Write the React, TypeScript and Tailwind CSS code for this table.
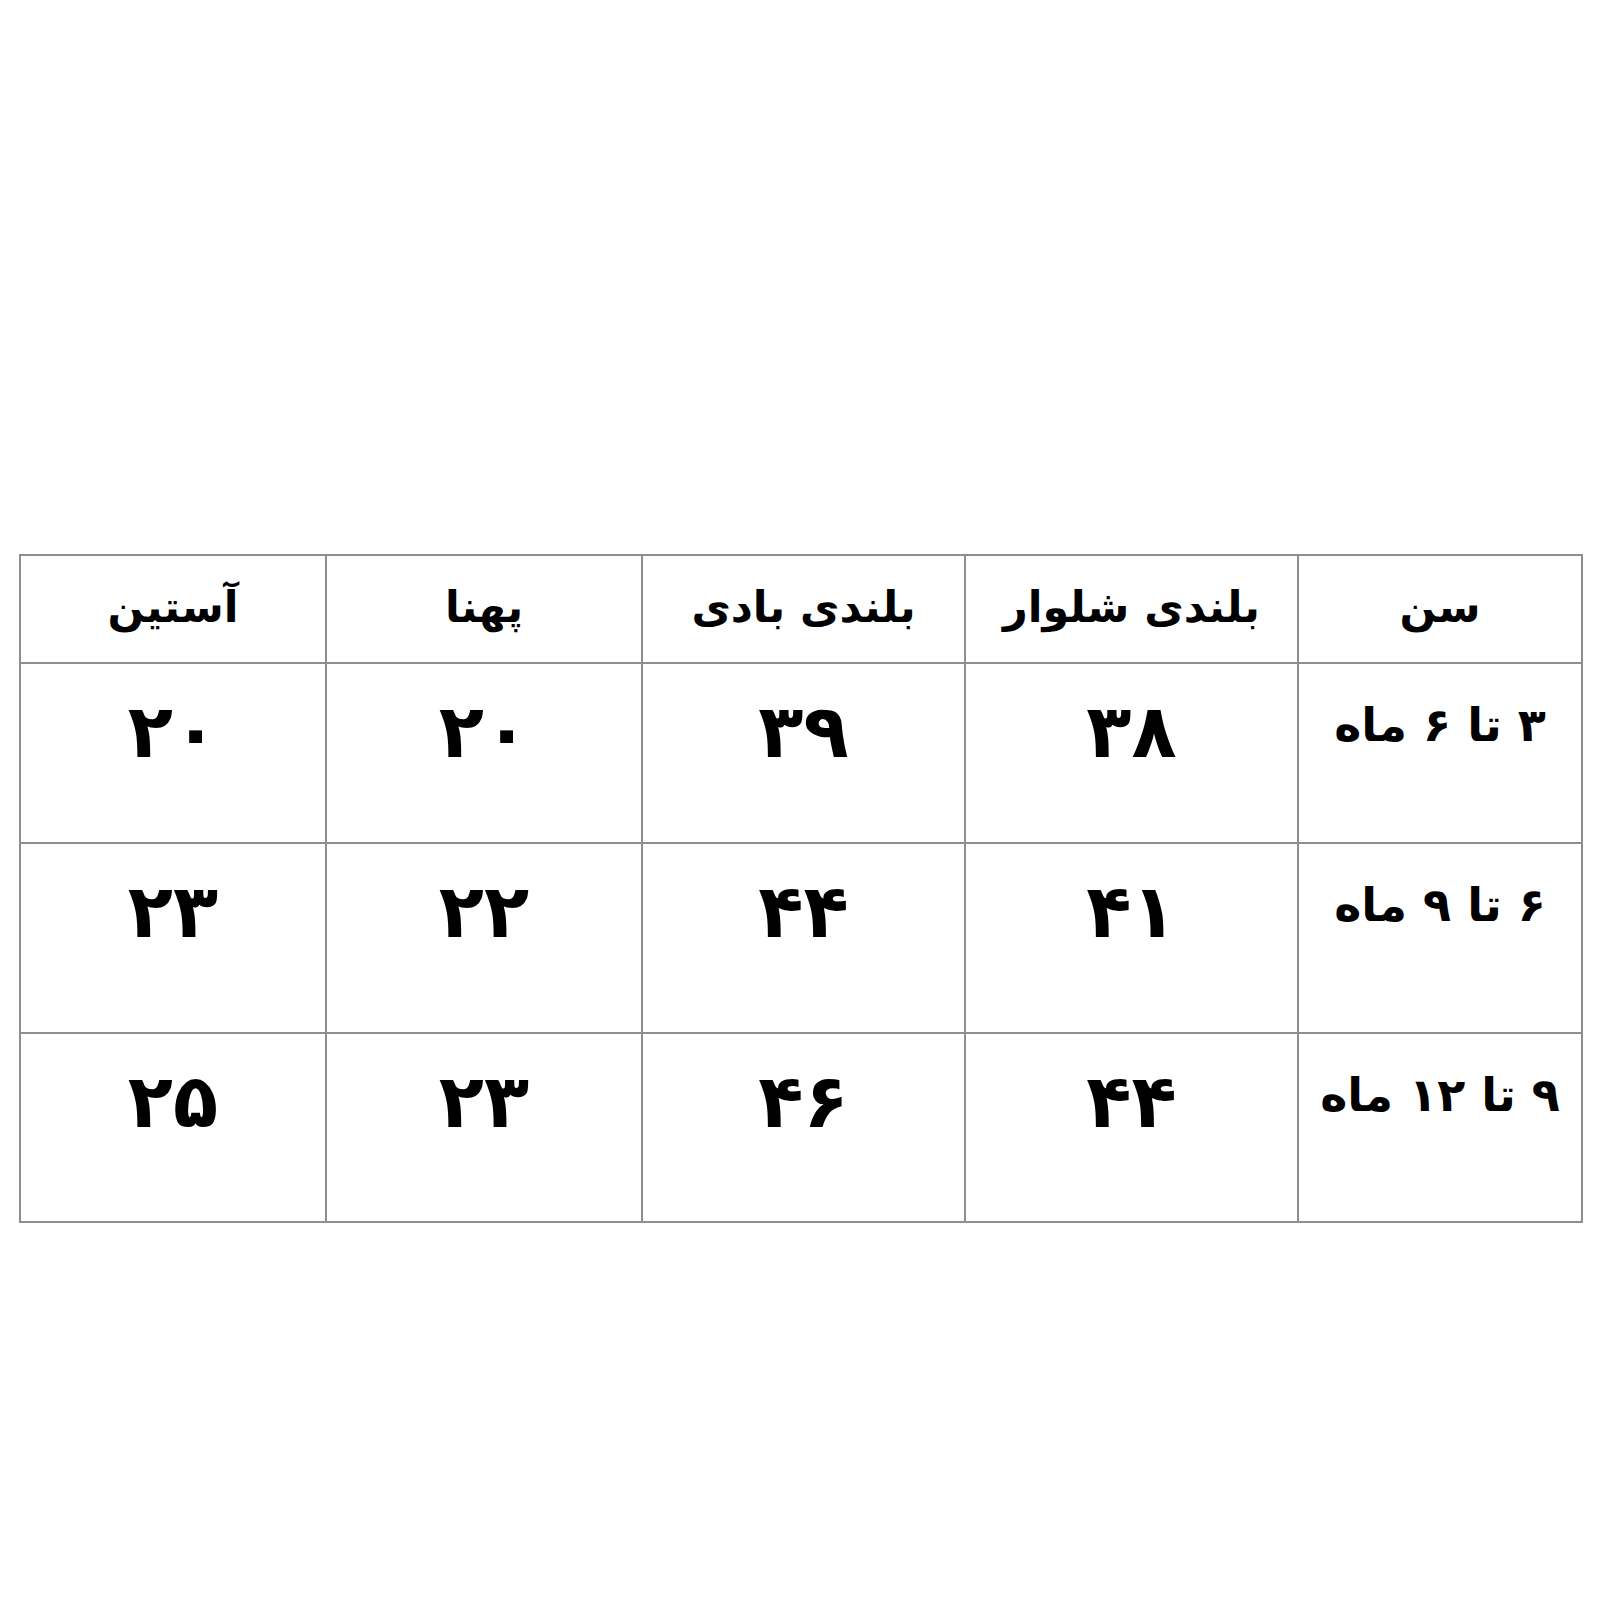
const rows = [
  { age: "۳ تا ۶ ماه", values: ["۳۸", "۳۹", "۲۰", "۲۰"], h: "h-[180px]" },
  { age: "۶ تا ۹ ماه", values: ["۴۱", "۴۴", "۲۲", "۲۳"], h: "h-[190px]" },
  { age: "۹ تا ۱۲ ماه", values: ["۴۴", "۴۶", "۲۳", "۲۵"], h: "h-[189px]" },
];

const headers = ["سن", "بلندی شلوار", "بلندی بادی", "پهنا", "آستین"];
const widths = ["w-[284px]", "w-[333px]", "w-[323px]", "w-[316px]", "w-[306px]"];

export default function App() {
  return (
    <div className="w-[1600px] h-[1600px] bg-white pt-[554px] pl-[19px] font-['DejaVu_Sans',sans-serif] text-black">
      <table dir="rtl" className="border-collapse w-[1562px] table-fixed">
        <colgroup>
          {widths.map((w, i) => (
            <col key={i} className={w} />
          ))}
        </colgroup>
        <thead>
          <tr className="h-[108px]">
            {headers.map((h, i) => (
              <th
                key={i}
                className="border-2 border-[#8e8e8e] text-[43px] font-bold text-center align-middle leading-none pb-1"
              >
                {h}
              </th>
            ))}
          </tr>
        </thead>
        <tbody>
          {rows.map((r, ri) => (
            <tr key={ri} className={r.h}>
              <td className="border-2 border-[#8e8e8e] text-[46px] font-bold text-center align-top pt-[38px] leading-none">
                {r.age}
              </td>
              {r.values.map((v, vi) => (
                <td
                  key={vi}
                  className="border-2 border-[#8e8e8e] text-[74px] font-bold text-center align-top pt-[30px] leading-none"
                >
                  {v}
                </td>
              ))}
            </tr>
          ))}
        </tbody>
      </table>
    </div>
  );
}
